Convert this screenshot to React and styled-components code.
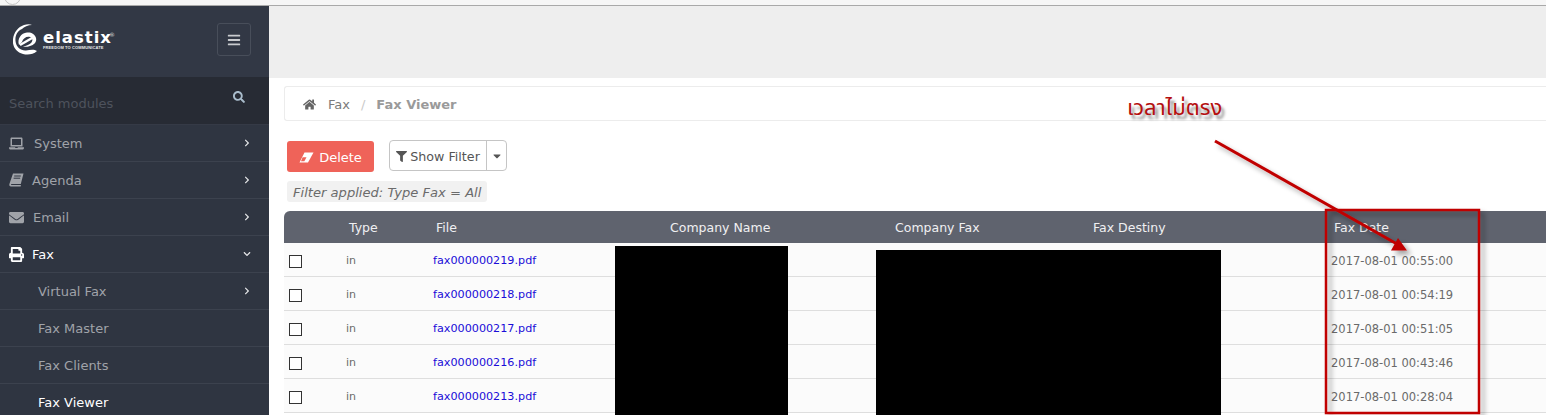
import React from "react"
import styled, { createGlobalStyle } from "styled-components"
import {
  FaBars, FaCaretDown, FaChevronDown, FaChevronRight, FaEnvelope,
  FaFilter, FaHome, FaLaptop, FaPrint, FaSearch,
} from "react-icons/fa"

const GlobalStyle = createGlobalStyle`
  html, body { margin: 0; padding: 0; background: #fff; overflow: hidden; }
  * { box-sizing: border-box; }
  body { font-family: "DejaVu Sans", Verdana, sans-serif; }
`

const Page = styled.div`
  position: relative;
  width: 1546px;
  height: 415px;
  overflow: hidden;
`

const BrowserEdge = styled.div`
  position: relative;
  height: 6px;
  overflow: hidden;
  background: #f6f6f6;
  border-bottom: 1px solid #a9a9a9;

  &::before {
    content: "";
    position: absolute;
    left: 4px;
    top: -12px;
    width: 15px;
    height: 15px;
    border: 1px solid #c4c4c4;
    border-radius: 50%;
  }
`

const Body = styled.div`
  display: flex;
  height: 409px;
`

const Sidebar = styled.aside`
  flex: 0 0 269px;
  background: #2f3541;
  overflow: hidden;
`

const Brand = styled.div`
  height: 71px;
  display: flex;
  align-items: center;
  justify-content: space-between;
  padding: 0 18px 4px 13px;
  background: #323845;
`

const Logo = styled.div`
  display: flex;
  align-items: center;
  gap: 4px;
  color: #fff;
`

const LogoWords = styled.div`
  display: flex;
  flex-direction: column;
  margin-top: 1px;
`

const LogoName = styled.div`
  font: bold 16.5px/15px "DejaVu Sans", sans-serif;
  letter-spacing: 1px;
  position: relative;
  sup {
    font-size: 6px;
    font-weight: normal;
    position: absolute;
    top: -3px;
    left: 66px;
    color: #cfd1d4;
  }
`

const LogoTag = styled.div`
  font: bold 4px/5px "Liberation Sans", sans-serif;
  letter-spacing: 0.12px;
  white-space: nowrap;
  color: #e8e8e8;
`

const MenuToggle = styled.button`
  width: 34px;
  height: 33px;
  padding: 0;
  display: flex;
  align-items: center;
  justify-content: center;
  background: transparent;
  border: 1px solid #484e5a;
  border-radius: 3px;
  color: #c9cbcf;
  font-size: 14px;
`

const SearchBar = styled.div`
  height: 48px;
  display: flex;
  align-items: center;
  justify-content: space-between;
  padding: 6px 24px 0 9px;
  background: #272b34;
  border-bottom: 1px solid #353a46;
  color: #4e535d;
  font-size: 13px;
  svg {
    color: #a9bccb;
    font-size: 12px;
    margin-top: -14px;
  }
`

const MenuRow = styled.div`
  height: 37px;
  display: flex;
  align-items: center;
  padding: ${p => (p.$sub ? "0 18px 0 38px" : "0 18px 0 9px")};
  border-bottom: 1px solid #3c424e;
  font-size: 13px;
  color: ${p => (p.$active ? "#fff" : "#a0a3a9")};
`

const MenuIcon = styled.span`
  width: ${p => p.$w}px;
  display: flex;
  align-items: center;
  font-size: 15px;
  color: ${p => (p.$active ? "#fff" : "#a0a3a9")};
`

const MenuLabel = styled.span`
  flex: 1;
`

const Chevron = styled.span`
  display: flex;
  font-size: 8px;
  color: #e4e5e7;
`

const Main = styled.main`
  flex: 1;
  min-width: 0;
  display: flex;
  flex-direction: column;
  background: #fff;
`

const TopBand = styled.div`
  height: 72px;
  flex: none;
  background: #eeeeee;
`

const Content = styled.div`
  padding: 8px 0 0 15px;
`

const Breadcrumb = styled.nav`
  height: 35px;
  display: flex;
  align-items: center;
  padding: 2px 0 0 18px;
  border: 1px solid #ececec;
  border-right: 0;
  border-radius: 3px 0 0 3px;
  font-size: 13px;
  color: #7b7b7b;
  svg {
    font-size: 13px;
    color: #656565;
    margin-right: 12px;
  }
`

const Slash = styled.span`
  color: #c9c9c9;
  margin: 0 11px;
`

const CurrentCrumb = styled.b`
  color: #9a9a9a;
`

const Toolbar = styled.div`
  display: flex;
  align-items: flex-start;
  margin: 19px 0 0 3px;
  gap: 15px;
`

const DeleteButton = styled.button`
  width: 87px;
  height: 31px;
  margin-top: 1px;
  display: flex;
  align-items: center;
  justify-content: center;
  gap: 5px;
  padding: 2px 0 0;
  border: 0;
  border-radius: 3px;
  background: #ef6359;
  color: #fff;
  font: 13px "DejaVu Sans", sans-serif;
`

const FilterGroup = styled.div`
  display: flex;
  height: 31px;
  border: 1px solid #c5c5c5;
  border-radius: 4px;
  color: #555;
  font-size: 12.7px;
`

const FilterMain = styled.div`
  width: 96px;
  padding-top: 2px;
  display: flex;
  align-items: center;
  justify-content: center;
  gap: 3px;
  svg { font-size: 11px; }
`

const FilterCaret = styled.div`
  width: 20px;
  display: flex;
  align-items: center;
  justify-content: center;
  border-left: 1px solid #c5c5c5;
  font-size: 12px;
`

const FilterNote = styled.div`
  display: inline-block;
  height: 21px;
  margin: 9px 0 0 3px;
  padding: 0 6px;
  border-radius: 3px;
  background: #f1f1f1;
  color: #6b6b6b;
  font-size: 13.1px;
  font-style: italic;
  line-height: 23px;
`

const Table = styled.div`
  margin-top: 9px;
`

const columns = "62px 87px 179px 225px 198px 241px 1fr"

const HeadRow = styled.div`
  display: grid;
  grid-template-columns: ${columns};
  align-items: center;
  height: 32px;
  background: #5f636e;
  border-radius: 6px 0 0 0;
  color: #f0f0f2;
  font-size: 12.5px;
  white-space: nowrap;
`

const HeadCell = styled.div`
  padding-left: ${p => p.$pad || 3}px;
`

const Row = styled.div`
  display: grid;
  grid-template-columns: ${columns};
  align-items: center;
  height: 34px;
  padding-top: 2px;
  background: #fbfbfb;
  border-bottom: 1px solid #dedede;
  color: #6a6a6a;
  font-size: 11px;
`

const Check = styled.span`
  width: 13px;
  height: 13px;
  margin: 2px 0 0 5px;
  background: #fff;
  border: 1px solid #333;
`

const FileLink = styled.a`
  color: #1a0dd8;
  font-size: 11.2px;
`

const DateCell = styled.div`
  padding-left: 55px;
  font-size: 11.5px;
`

const Blackout = styled.div`
  position: absolute;
  left: ${p => p.$left}px;
  top: ${p => p.$top}px;
  width: ${p => p.$width}px;
  bottom: 0;
  background: #000;
`

const Remark = styled.div`
  position: absolute;
  left: 1127px;
  top: 92px;
  font: 22px "Noto Sans Thai", "Liberation Serif", "Noto Sans", serif;
  color: #b50f0f;
  text-shadow: 3px 4px 3px rgba(0, 0, 0, 0.45);
  white-space: nowrap;
`

const Markup = styled.svg`
  position: absolute;
  left: 0;
  top: 0;
  pointer-events: none;
`

const BookIcon = () => (
  <svg width="15" height="14" viewBox="0 0 15 14">
    <path d="M4 0.5 H14.5 L11.8 11 H2.6 C2 11 1.8 11.7 2.4 12 H11.5 L12 12.5 L11.6 13.5 H2 C0.6 13.5 0 12.4 0.4 11 Z" fill="currentColor" />
    <path d="M5.2 3 H11.8 M4.6 5.2 H11.2" stroke="#2f3541" strokeWidth="1" />
  </svg>
)

const EraserIcon = () => (
  <svg width="15" height="11" viewBox="0 0 15 11">
    <path d="M5.5 0.5 H14.5 L9 10.5 H0.5 Z" fill="#fff" />
    <path d="M3.6 5.2 L7.5 5.2 L5.4 9.2 H2 Z" fill="#ef6359" />
  </svg>
)

const menu = [
  { label: "System", icon: <FaLaptop />, w: 25 },
  { label: "Agenda", icon: <BookIcon />, w: 23 },
  { label: "Email", icon: <FaEnvelope />, w: 24 },
]

const subMenu = [
  { label: "Virtual Fax", more: true },
  { label: "Fax Master" },
  { label: "Fax Clients" },
  { label: "Fax Viewer", active: true },
]

const faxes = [
  ["fax000000219.pdf", "2017-08-01 00:55:00"],
  ["fax000000218.pdf", "2017-08-01 00:54:19"],
  ["fax000000217.pdf", "2017-08-01 00:51:05"],
  ["fax000000216.pdf", "2017-08-01 00:43:46"],
  ["fax000000213.pdf", "2017-08-01 00:28:04"],
]

const LogoMark = () => (
  <svg width="26" height="31" viewBox="0 0 26 31">
    <path d="M9 5 C4 7 2 12 2.5 17 C3 23 8 27 13 26.5 C17 26 21 25 24 27 C20 31 14 31 10 30 C3 28 -1 22 0 15 C1 8 5 3 11 1 C14 0 17 0 19 1 C15 1 11 3 9 5 Z" fill="#fff" />
    <path d="M6 21 C4 15 8 9 14 8.5 C18 8 22 10 23 14 C24 18 21 21 17 22 C14 23 12 23 10 22.5 C13 22 16 21 18 19 C20 17 20 14 17 13 C14 12 10 14 9 18 Z" fill="#fff" />
    <path d="M7 21 L20 13.5" stroke="#fff" strokeWidth="2.4" />
  </svg>
)

const App = () => (
  <Page>
    <GlobalStyle />
    <BrowserEdge />
    <Body>
      <Sidebar>
        <Brand>
          <Logo>
            <LogoMark />
            <LogoWords>
              <LogoName>elastix<sup>®</sup></LogoName>
              <LogoTag>FREEDOM TO COMMUNICATE</LogoTag>
            </LogoWords>
          </Logo>
          <MenuToggle><FaBars /></MenuToggle>
        </Brand>
        <SearchBar>
          <span>Search modules</span>
          <FaSearch />
        </SearchBar>
        {menu.map(({ label, icon, w }) => (
          <MenuRow key={label}>
            <MenuIcon $w={w}>{icon}</MenuIcon>
            <MenuLabel>{label}</MenuLabel>
            <Chevron><FaChevronRight /></Chevron>
          </MenuRow>
        ))}
        <MenuRow $active>
          <MenuIcon $w={23} $active><FaPrint /></MenuIcon>
          <MenuLabel>Fax</MenuLabel>
          <Chevron><FaChevronDown /></Chevron>
        </MenuRow>
        {subMenu.map(({ label, more, active }) => (
          <MenuRow key={label} $sub $active={active}>
            <MenuLabel>{label}</MenuLabel>
            {more && <Chevron><FaChevronRight /></Chevron>}
          </MenuRow>
        ))}
      </Sidebar>
      <Main>
        <TopBand />
        <Content>
          <Breadcrumb>
            <FaHome />
            <span>Fax</span>
            <Slash>/</Slash>
            <CurrentCrumb>Fax Viewer</CurrentCrumb>
          </Breadcrumb>
          <Toolbar>
            <DeleteButton><EraserIcon />Delete</DeleteButton>
            <FilterGroup>
              <FilterMain><FaFilter />Show Filter</FilterMain>
              <FilterCaret><FaCaretDown /></FilterCaret>
            </FilterGroup>
          </Toolbar>
          <FilterNote>Filter applied: Type Fax = All</FilterNote>
          <Table>
            <HeadRow>
              <div />
              <HeadCell>Type</HeadCell>
              <HeadCell>File</HeadCell>
              <HeadCell $pad={58}>Company Name</HeadCell>
              <HeadCell $pad={58}>Company Fax</HeadCell>
              <HeadCell $pad={58}>Fax Destiny</HeadCell>
              <HeadCell $pad={58}>Fax Date</HeadCell>
            </HeadRow>
            {faxes.map(([file, date]) => (
              <Row key={file}>
                <Check />
                <span>in</span>
                <FileLink>{file}</FileLink>
                <span />
                <span />
                <span />
                <DateCell>{date}</DateCell>
              </Row>
            ))}
          </Table>
        </Content>
      </Main>
    </Body>
    <Blackout $left={615} $top={246} $width={173} />
    <Blackout $left={876} $top={250} $width={345} />
    <Remark>เวลาไม่ตรง</Remark>
    <Markup width="1546" height="415" viewBox="0 0 1546 415">
      <defs>
        <filter id="markupShadow" x="-10%" y="-10%" width="120%" height="120%">
          <feDropShadow dx="4" dy="4" stdDeviation="2.5" floodColor="#000" floodOpacity="0.35" />
        </filter>
      </defs>
      <g filter="url(#markupShadow)">
        <rect x="1326" y="210" width="153" height="203" fill="none" stroke="#c00000" strokeWidth="2.5" />
        <path d="M1215 141 L1397 244" stroke="#c00000" strokeWidth="3" fill="none" />
        <path d="M1407 250.5 L1398 238 L1391 250.5 Z" fill="#c00000" />
      </g>
    </Markup>
  </Page>
)

export default App
